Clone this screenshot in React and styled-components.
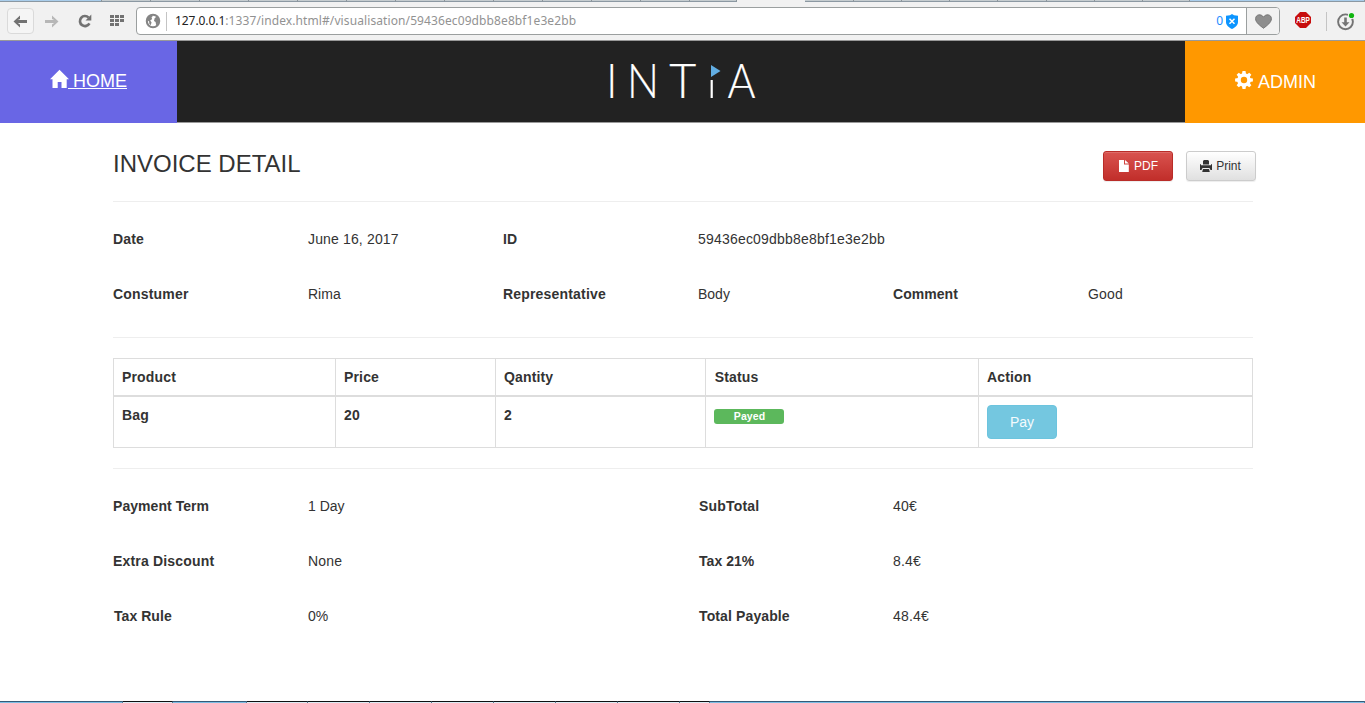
import React from "react";
import styled, { createGlobalStyle } from "styled-components";

const Global = createGlobalStyle`
  * { box-sizing: border-box; }
  html, body { margin: 0; padding: 0; background: #fff; overflow: hidden; }
  body {
    font-family: "Liberation Sans", Arial, sans-serif;
    font-size: 14px;
    line-height: 20px;
    color: #333;
  }
  svg { display: block; flex: none; }
`;

const Page = styled.div`
  width: 1365px;
  height: 703px;
  display: flex;
  flex-direction: column;
`;

/* ---------- browser bar ---------- */
const TabStrip = styled.div`
  height: 2px;
  flex: none;
  display: flex;
  background: #f1f1f1;
  overflow: hidden;
`;
const TabEdge = styled.div`
  width: ${(p) => p.$w}px;
  flex: none;
  height: 2px;
  background: ${(p) => p.$bg};
  border-bottom: 1px solid ${(p) => (p.$active ? "#f1f1f1" : "#8b98a2")};
  border-right: ${(p) => (p.$active ? 0 : 1)}px solid #8b949a;
`;
const BrowserBar = styled.div`
  height: 39px;
  flex: none;
  display: flex;
  align-items: flex-start;
  padding: 5px 0 0 7px;
  background: #f1f1f1;
  border-bottom: 1px solid #999;
`;
const BackButton = styled.div`
  width: 27px;
  height: 26px;
  margin-top: 1px;
  display: flex;
  align-items: center;
  justify-content: center;
  border: 1px solid #dadada;
  border-radius: 4px;
  background: #f5f5f5;
`;
const BarIcon = styled.div`
  height: 28px;
  margin-left: ${(p) => p.$gap}px;
  display: flex;
  align-items: center;
`;
const AddressField = styled.div`
  width: 1144px;
  height: 28px;
  margin-left: 11px;
  display: flex;
  align-items: center;
  background: #fff;
  border: 1px solid #9b9f9f;
  border-radius: 4px;
  overflow: hidden;
  padding-left: 8px;
`;
const Divider = styled.div`
  width: 1px;
  height: 19px;
  margin: 0 ${(p) => p.$r || 0}px 0 ${(p) => p.$l || 0}px;
  background: #c4c4c4;
`;
const Url = styled.div`
  flex: 1;
  font: 12px/20px "Noto Sans", "Open Sans", sans-serif;
  letter-spacing: 0.1px;
  color: #929292;
  white-space: nowrap;
`;
const Host = styled.span`
  color: #222;
  letter-spacing: -0.07px;
`;
const BlockCount = styled.div`
  font: 12px/20px "Noto Sans", "Open Sans", sans-serif;
  color: #1a8cff;
  margin-right: 3px;
`;
const HeartBox = styled.div`
  width: 33px;
  height: 26px;
  margin-left: 8px;
  display: flex;
  align-items: center;
  justify-content: center;
  background: #f2f2f2;
  border-left: 1px solid #9b9f9f;
`;

/* ---------- site header ---------- */
const Header = styled.header`
  height: 82px;
  flex: none;
  display: flex;
  font-size: 18px;
  color: #fff;
`;
const HomeLink = styled.a`
  width: 177px;
  padding: 28px 0 0 50px;
  display: flex;
  background: #6966e5;
`;
const HomeText = styled.span`
  height: 24px;
  line-height: 24px;
  white-space: pre;
  text-decoration: underline;
  text-underline-offset: 1px;
  text-decoration-thickness: 1px;
  margin-left: -1px;
`;
const Brand = styled.div`
  flex: 1;
  display: flex;
  padding: 4px 0 0 423px;
  background: #222;
  border-bottom: 1px solid #9a9a9a;
`;
const AdminLink = styled.a`
  width: 180px;
  padding: 29px 0 0 50px;
  display: flex;
  background: #ff9800;
`;
const AdminText = styled.span`
  line-height: 24px;
  margin-left: 5px;
`;

/* ---------- invoice ---------- */
const Content = styled.main`
  flex: 1;
  width: 1143px;
  margin-left: 113px;
`;
const TitleRow = styled.div`
  height: 78px;
  display: flex;
  padding-top: 28px;
`;
const Title = styled.h3`
  flex: 1;
  margin: 0;
  font-size: 24px;
  font-weight: 400;
  line-height: 26px;
`;
const ToolButton = styled.button`
  width: 70px;
  height: 30px;
  margin: 0 0 0 ${(p) => (p.$danger ? 0 : 13)}px;
  padding: 0 ${(p) => (p.$danger ? 0 : 1)}px 1px 0;
  display: flex;
  align-items: center;
  justify-content: center;
  gap: ${(p) => (p.$danger ? 5 : 4)}px;
  font: 12px/18px "Liberation Sans", Arial, sans-serif;
  border-radius: 3px;
  color: ${(p) => (p.$danger ? "#fff" : "#333")};
  border: 1px solid ${(p) => (p.$danger ? "#b92c28" : "#ccc")};
  background: ${(p) =>
    p.$danger
      ? "linear-gradient(#d9534f, #c12e2a)"
      : "linear-gradient(#fff, #e0e0e0)"};
  box-shadow: inset 0 1px 0 rgba(255, 255, 255, 0.15), 0 1px 1px rgba(0, 0, 0, 0.075);
`;
const Rule = styled.hr`
  width: 1140px;
  height: 1px;
  margin: 0;
  border: 0;
  background: #eee;
`;
const FieldGrid = styled.div`
  display: grid;
  grid-template-columns: repeat(6, 195px);
  grid-auto-rows: 20px;
  row-gap: 35px;
  padding: 27px 0 ${(p) => p.$bottom || 0}px;
  white-space: nowrap;
`;
const Label = styled.b`
  grid-column-start: ${(p) => p.$col || "auto"};
  padding-left: ${(p) => p.$indent || 0}px;
  letter-spacing: ${(p) => p.$ls ?? 0.18}px;
`;
const Value = styled.span`
  letter-spacing: ${(p) => p.$ls ?? 0.2}px;
`;
const Table = styled.table`
  width: 1140px;
  margin: 20px 0;
  table-layout: fixed;
  border-collapse: separate;
  border-spacing: 0;
  border-left: 1px solid #ddd;
  border-top: 1px solid #ddd;
`;
const Col = styled.col`
  width: ${(p) => p.$w}px;
`;
const Cell = styled.td`
  height: ${(p) => (p.$head ? 38 : 51)}px;
  padding: 8px;
  border-right: 1px solid #ddd;
  border-bottom: ${(p) => (p.$head ? 2 : 1)}px solid #ddd;
  font-weight: 700;
  text-align: left;
  vertical-align: top;
  letter-spacing: 0.15px;
  text-indent: ${(p) => p.$indent || 0}px;
`;
const Badge = styled.div`
  width: 70px;
  height: 15px;
  margin-top: 4px;
  padding-left: 1px;
  border-radius: 3px;
  background: #5cb85c;
  color: #fff;
  font-size: 10.5px;
  line-height: 15px;
  text-align: center;
  letter-spacing: 0.1px;
`;
const PayButton = styled.button`
  display: block;
  width: 70px;
  height: 34px;
  padding: 0;
  border: 1px solid #6cc4de;
  border-radius: 4px;
  background: #74c7e0;
  color: #f4fbfd;
  font: 14px/20px "Liberation Sans", Arial, sans-serif;
`;
const BottomEdge = styled.div`
  height: 2px;
  flex: none;
  display: flex;
`;
const EdgePart = styled.div`
  width: ${(p) => p.$w}px;
  border-top: 1px solid ${(p) => (p.$dark ? "#0d1012" : "#355a77")};
  border-right: 1px solid #53788f;
  background: ${(p) => (p.$dark ? "#dceaf2" : "#7dbde3")};
`;

const Logo = () => (
  <svg width="165" height="76" viewBox="0 -15 165 76" fill="#fff" stroke="#fff" strokeWidth="0.2" fontFamily="Lato" fontWeight="300" fontSize="46.500">
    <text x="6.2" y="38" textLength="11" lengthAdjust="spacingAndGlyphs">I</text>
    <text x="27" y="38" textLength="32" lengthAdjust="spacingAndGlyphs">N</text>
    <text x="69.300" y="38" textLength="27" lengthAdjust="spacingAndGlyphs">T</text>
    <rect x="110.600" y="20" width="2.200" height="18" stroke="none" />
    <path d="M111 5v12l9.500-6z" fill="#62aee3" stroke="none" />
    <text x="127.600" y="38" textLength="28" lengthAdjust="spacingAndGlyphs">A</text>
  </svg>
);

const HomeIcon = () => (
  <svg width="19" height="20" viewBox="0 0 19 20" fill="#fff">
    <path d="M9.500 0.700 0 10.200h2.500V19h5.200v-6h3.800v6h5.200v-8.800H19z" />
  </svg>
);
const GearIcon = () => (
  <svg width="18" height="20" viewBox="-9 -11 18 20" fill="none">
    <circle r="5" cy="-1" stroke="#fff" strokeWidth="3.600" />
    <g transform="translate(0 -1)" fill="#fff">
      {[0, 45, 90, 135, 180, 225, 270, 315].map((a) => (
        <path key={a} d="M-1.500-8.900h3L2.100-5.500h-4.200z" transform={`rotate(${a})`} />
      ))}
    </g>
  </svg>
);
const Arrow = ({ color, flip }) => (
  <svg width="15" height="13" viewBox="0 0 15 13" fill={color}>
    <path d="M7 .5v3.600L4.800 5H14v3H4.800L7 9.600v2.900L.5 6.500z" transform={flip ? "matrix(-1 0 0 1 15 0)" : undefined} />
  </svg>
);

const GREY = "#c5cccf";
const BLUE = "#a9cdeb";
const tabs = [
  [102, BLUE],
  ...Array(12).fill([49, GREY]),
  [47, GREY],
  [68, "#f1f1f1", true],
  [49, GREY], [48, GREY], [48, GREY], [48, GREY], [49, GREY], [48, GREY], [48, GREY], [47, GREY],
  [175, BLUE],
];
const edges = [[123, 0], [50, 1], [74, 0], [61, 1], [62, 1], [62, 1], [62, 1], [62, 1], [62, 1], [62, 1], [30, 1], [655, 0]];

export default function App() {
  return (
    <Page>
      <Global />
      <TabStrip>
        {tabs.map(([w, bg, active], i) => (
          <TabEdge key={i} $w={w} $bg={bg} $active={active} />
        ))}
      </TabStrip>
      <BrowserBar>
        <BackButton><Arrow color="#727272" /></BackButton>
        <BarIcon $gap={10}><Arrow color="#b7b7b7" flip /></BarIcon>
        <BarIcon $gap={19}>
          <svg width="14" height="14" viewBox="0 0 14 14">
            <path d="M11.400 9.300A5 5 0 1 1 10.600 3.600" fill="none" stroke="#727272" strokeWidth="2.700" />
            <path d="M13.300 .6v6H7.500z" fill="#727272" />
          </svg>
        </BarIcon>
        <BarIcon $gap={18}>
          <svg width="15" height="12" viewBox="0 0 15 12" fill="#727272">
            {[0, 5, 10].map((x) => [0, 4, 8].map((y) => (x === 10 && y === 8 ? null : <rect key={`${x}-${y}`} x={x} y={y} width="4" height="3" />)))}
          </svg>
        </BarIcon>
        <AddressField>
          <svg width="16" height="16" viewBox="0 0 16 16">
            <circle cx="8" cy="8" r="6.200" fill="#fff" stroke="#858585" strokeWidth="2.100" />
            <path d="M2.500 5 5 2.400 8 2.800 6.500 4.600 7.200 6 5.200 7.500 6.600 9.500 5.600 12.300 4.300 10.800 4.100 8.500 2 7zM9.600 5.200l2.300-2 2 3.300-.4 3.400-2.300 2.600-.6-3.400L9 8z" fill="#858585" />
          </svg>
          <Divider $l={5} $r={8} />
          <Url><Host>127.0.0.1</Host>:1337/index.html#/visualisation/59436ec09dbb8e8bf1e3e2bb</Url>
          <BlockCount>0</BlockCount>
          <svg width="12" height="15" viewBox="0 0 12 15">
            <path d="M6 0l2 1.200 4 .6V8c0 3.400-3 5.700-6 7-3-1.300-6-3.600-6-7V1.800l4-.6z" fill="#0d95ff" />
            <path d="M3.500 4.700l5 5m0-5l-5 5" stroke="#fff" strokeWidth="1.500" />
          </svg>
          <HeartBox>
            <svg width="17" height="15" viewBox="0 0 17 15">
              <path d="M8.500 14.300C5 11.500.6 8.500.6 4.700.6.300 6.300-.6 8.500 3.200 10.700-.6 16.400.3 16.400 4.700c0 3.800-4.400 6.800-7.900 9.600z" fill="#8e8e8e" stroke="#777" />
            </svg>
          </HeartBox>
        </AddressField>
        <BarIcon $gap={12}>
          <svg width="22" height="22" viewBox="-3 -2 22 22">
            <path d="M5 0h6l5 5v6l-5 5H5l-5-5V5z" fill="#c70d0d" />
            <text x="1.300" y="11" textLength="13.600" lengthAdjust="spacingAndGlyphs" fontFamily="Liberation Sans" fontWeight="700" fontSize="8.500" fill="#fff">ABP</text>
          </svg>
        </BarIcon>
        <BarIcon $gap={12}><Divider $r={10} /></BarIcon>
        <BarIcon $gap={0}>
          <svg width="18" height="19" viewBox="0 0 18 19">
            <circle cx="8.500" cy="9.800" r="7.400" fill="none" stroke="#747474" strokeWidth="1.900" />
            <path d="M7.200 5.500h2.600v4.700h2.700l-4 4.300-4-4.300h2.700z" fill="#747474" />
            <circle cx="14.500" cy="3.500" r="3.600" fill="#f1f1f1" />
            <circle cx="14.500" cy="3.500" r="2.600" fill="#0fb50f" />
          </svg>
        </BarIcon>
      </BrowserBar>

      <Header>
        <HomeLink><HomeIcon /><HomeText> HOME</HomeText></HomeLink>
        <Brand><Logo /></Brand>
        <AdminLink><GearIcon /><AdminText>ADMIN</AdminText></AdminLink>
      </Header>

      <Content>
        <TitleRow>
          <Title>INVOICE DETAIL</Title>
          <ToolButton $danger>
            <svg width="11" height="12" viewBox="0 0 11 12" fill="#fff"><path d="M1 0h5v4.500h4.800V12H1zM7 0l3.800 3.500H7z" /></svg>
            PDF
          </ToolButton>
          <ToolButton>
            <svg width="12" height="12" viewBox="0 0 12 12" fill="#333"><path d="M3 4.500V1l1-1h4l1 1v3.500zM0 4.500 1 4v1.300h10V4l1 .5V10h-1.500l-1-2h-7l-1 2H0zM3 9h6l.8 3H2.200z" /></svg>
            Print
          </ToolButton>
        </TitleRow>
        <Rule />
        <FieldGrid $bottom={33}>
          <Label>Date</Label><Value $ls={0.15}>June 16, 2017</Value>
          <Label>ID</Label><Value>59436ec09dbb8e8bf1e3e2bb</Value>
          <Label $col={1}>Constumer</Label><Value $ls={0}>Rima</Value>
          <Label>Representative</Label><Value $ls={0}>Body</Value>
          <Label $ls={0.05}>Comment</Label><Value>Good</Value>
        </FieldGrid>
        <Rule />
        <Table>
          <colgroup>
            <Col $w={222} /><Col $w={160} /><Col $w={210} /><Col $w={273} /><Col $w={274} />
          </colgroup>
          <thead>
            <tr>
              {["Product", "Price", "Qantity", "Status", "Action"].map((t) => (
                <Cell as="th" key={t} $head $indent={t === "Status" ? 0.7 : 0}>{t}</Cell>
              ))}
            </tr>
          </thead>
          <tbody>
            <tr>
              <Cell>Bag</Cell>
              <Cell>20</Cell>
              <Cell>2</Cell>
              <Cell><Badge>Payed</Badge></Cell>
              <Cell><PayButton>Pay</PayButton></Cell>
            </tr>
          </tbody>
        </Table>
        <Rule />
        <FieldGrid>
          <Label $ls={0.05}>Payment Term</Label><Value $ls={0}>1 Day</Value>
          <Label $col={4} $indent={1}>SubTotal</Label><Value>40€</Value>
          <Label $col={1}>Extra Discount</Label><Value>None</Value>
          <Label $col={4} $indent={1} $ls={0.05}>Tax 21%</Label><Value>8.4€</Value>
          <Label $col={1} $indent={1} $ls={0.05}>Tax Rule</Label><Value $ls={0}>0%</Value>
          <Label $col={4} $indent={1} $ls={0.12}>Total Payable</Label><Value>48.4€</Value>
        </FieldGrid>
      </Content>
      <BottomEdge>
        {edges.map(([w, dark], i) => <EdgePart key={i} $w={w} $dark={!!dark} />)}
      </BottomEdge>
    </Page>
  );
}
